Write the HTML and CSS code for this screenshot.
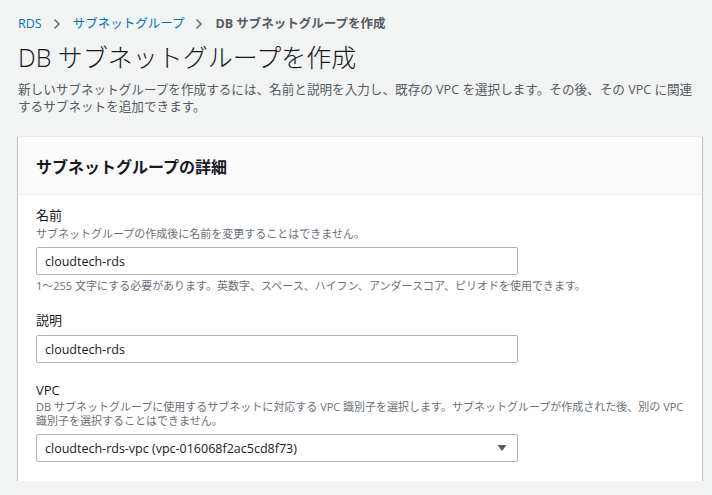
FILE: index.html
```html
<!DOCTYPE html>
<html lang="ja">
<head>
<meta charset="utf-8">
<title>DB サブネットグループを作成</title>
<link rel="stylesheet" href="styles.css">
</head>
<body>
<div class="page">
  <nav class="crumbs">
    <a class="crumb-link">RDS</a>
    <svg class="chev" width="8" height="12" viewBox="0 0 8 12"><path d="M1.5 1.5 L6 6 L1.5 10.5" fill="none" stroke="#687078" stroke-width="1.6"/></svg>
    <a class="crumb-link">サブネットグループ</a>
    <svg class="chev" width="8" height="12" viewBox="0 0 8 12"><path d="M1.5 1.5 L6 6 L1.5 10.5" fill="none" stroke="#687078" stroke-width="1.6"/></svg>
    <span class="crumb-current">DB サブネットグループを作成</span>
  </nav>
  <h1 class="title">DB サブネットグループを作成</h1>
  <p class="intro">新しいサブネットグループを作成するには、名前と説明を入力し、既存の VPC を選択します。その後、その VPC に関連するサブネットを追加できます。</p>

  <section class="card">
    <header class="card-head">
      <h2 class="card-title">サブネットグループの詳細</h2>
    </header>
    <div class="card-body">
      <div class="field">
        <div class="label">名前</div>
        <div class="hint first">サブネットグループの作成後に名前を変更することはできません。</div>
        <div class="input">cloudtech-rds</div>
        <div class="constraint">1〜255 文字にする必要があります。英数字、スペース、ハイフン、アンダースコア、ピリオドを使用できます。</div>
      </div>
      <div class="field">
        <div class="label">説明</div>
        <div class="input">cloudtech-rds</div>
      </div>
      <div class="field">
        <div class="label">VPC</div>
        <div class="hint">DB サブネットグループに使用するサブネットに対応する VPC 識別子を選択します。サブネットグループが作成された後、別の VPC 識別子を選択することはできません。</div>
        <div class="input select">
          <span>cloudtech-rds-vpc (vpc-016068f2ac5cd8f73)</span>
          <svg class="caret" width="10" height="8" viewBox="0 0 10 8"><path d="M0.5 1 L9.5 1 L5 7 Z" fill="#545b64"/></svg>
        </div>
      </div>
    </div>
  </section>
</div>
</body>
</html>
```

FILE: styles.css
```css
html, body {
  margin: 0;
  padding: 0;
  background: #f2f3f3;
}
body {
  font-family: "Open Sans", "Noto Sans CJK JP", sans-serif;
  color: #16191f;
}
.page {
  padding: 14px 10px 0 18px;
}
.crumbs {
  display: flex;
  align-items: center;
  font-size: 12.5px;
  line-height: 20px;
  height: 20px;
}
.chev {
  margin: 0 12px 0 11px;
}
.crumb-link {
  color: #0073bb;
}
.crumb-current {
  color: #545b64;
  font-weight: bold;
}
.title {
  margin: 7px 0 0;
  font-size: 25px;
  font-weight: 300;
  line-height: 32px;
  color: #16191f;
}
.intro {
  margin: 8px 0 0;
  font-size: 12.6px;
  line-height: 17px;
  color: #545b64;
}
.card {
  margin-top: 21px;
  width: 684px;
  background: #fff;
  border-top: 1px solid #eaeded;
  box-shadow: 0 1px 1px 0 rgba(0, 28, 36, 0.3), 1px 1px 1px 0 rgba(0, 28, 36, 0.15), -1px 1px 1px 0 rgba(0, 28, 36, 0.15);
}
.card-head {
  background: #fafafa;
  border-bottom: 1px solid #eaeded;
  height: 57px;
  display: flex;
  align-items: center;
  padding: 0 18px;
}
.card-title {
  margin: 0;
  font-size: 16px;
  font-weight: bold;
  color: #16191f;
}
.card-body {
  padding: 11px 18px 19px;
  display: flex;
  flex-direction: column;
  gap: 18px;
}
.label {
  font-size: 13px;
  line-height: 18px;
  color: #16191f;
}
.hint {
  font-size: 11px;
  line-height: 14px;
  color: #687078;
  margin-top: 1px;
}
.hint.first {
  margin-top: 3px;
}
.constraint {
  font-size: 11px;
  line-height: 14px;
  color: #687078;
  margin-top: 4px;
}
.input {
  box-sizing: border-box;
  width: 482px;
  height: 28px;
  margin-top: 6px;
  border: 1px solid #aab7b8;
  border-radius: 2px;
  background: #fff;
  padding: 0 8px;
  display: flex;
  align-items: center;
  font-size: 12.5px;
  color: #16191f;
}
.select {
  justify-content: space-between;
  padding-right: 10px;
}
.caret {
  display: block;
}
```
